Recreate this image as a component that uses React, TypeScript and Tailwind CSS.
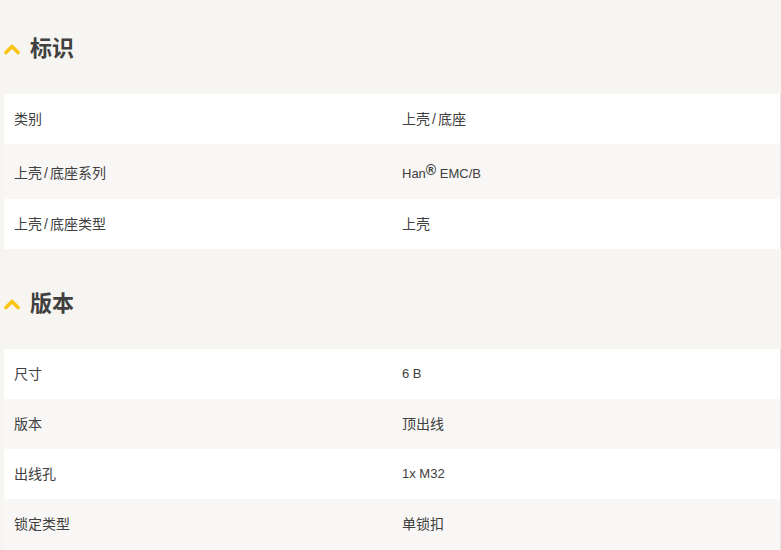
import React from "react";

interface Row {
  label: string;
  value: React.ReactNode;
  latin?: boolean;
  tall?: boolean;
}

// CJK text: the slash sits a little wider in the reference font
function Cjk({ text }: { text: string }) {
  const parts = text.split("/");
  return (
    <>
      {parts.map((p, i) => (
        <React.Fragment key={i}>
          {i > 0 && <span className="px-[2px]">/</span>}
          {p}
        </React.Fragment>
      ))}
    </>
  );
}

const sections: { title: string; rows: Row[] }[] = [
  {
    title: "标识",
    rows: [
      { label: "类别", value: <Cjk text="上壳/底座" /> },
      {
        label: "上壳/底座系列",
        value: (
          <>
            Han
            <sup className="text-[14px] font-bold relative -top-[3px]">®</sup> EMC/B
          </>
        ),
        latin: true,
        tall: true,
      },
      { label: "上壳/底座类型", value: "上壳" },
    ],
  },
  {
    title: "版本",
    rows: [
      { label: "尺寸", value: "6 B", latin: true },
      { label: "版本", value: "顶出线" },
      { label: "出线孔", value: "1x M32", latin: true },
      { label: "锁定类型", value: "单锁扣" },
    ],
  },
];

function Chevron() {
  return (
    <svg width="16" height="12" viewBox="0 0 16 12" className="shrink-0">
      <path
        d="M2 9.5 L8 3.5 L14 9.5"
        fill="none"
        stroke="#fcc419"
        strokeWidth="3.6"
        strokeLinecap="round"
        strokeLinejoin="round"
      />
    </svg>
  );
}

export default function App() {
  return (
    <div
      className="w-[781px] h-[550px] overflow-hidden bg-[#f6f5f1] pt-[26px]"
      style={{ fontFamily: '"Liberation Sans", "Noto Sans CJK SC", sans-serif' }}
    >
      {sections.map((section, si) => (
        <div key={section.title} className={si > 0 ? "mt-[32px]" : ""}>
          <div className="flex items-center gap-[10px] pl-[4px] h-[46px]">
            <Chevron />
            <h2 className="text-[22px] font-bold text-[#404040] leading-none">
              {section.title}
            </h2>
          </div>
          <div className="mt-[22px] ml-[4px] w-[777px] border-r border-[#e4e4e4]">
            {section.rows.map((row, i) => (
              <div
                key={row.label}
                className={`grid grid-cols-2 items-center text-[#404040] ${
                  row.tall ? "h-[55px] pt-[4px]" : "h-[50px]"
                } ${i % 2 === 0 ? "bg-white" : "bg-[#f8f7f5]"}`}
              >
                <div className="px-[10px] text-[14px]">
                  <Cjk text={row.label} />
                </div>
                <div className={`px-[10px] ${row.latin ? "text-[13px]" : "text-[14px]"}`}>
                  {row.value}
                </div>
              </div>
            ))}
          </div>
        </div>
      ))}
    </div>
  );
}
